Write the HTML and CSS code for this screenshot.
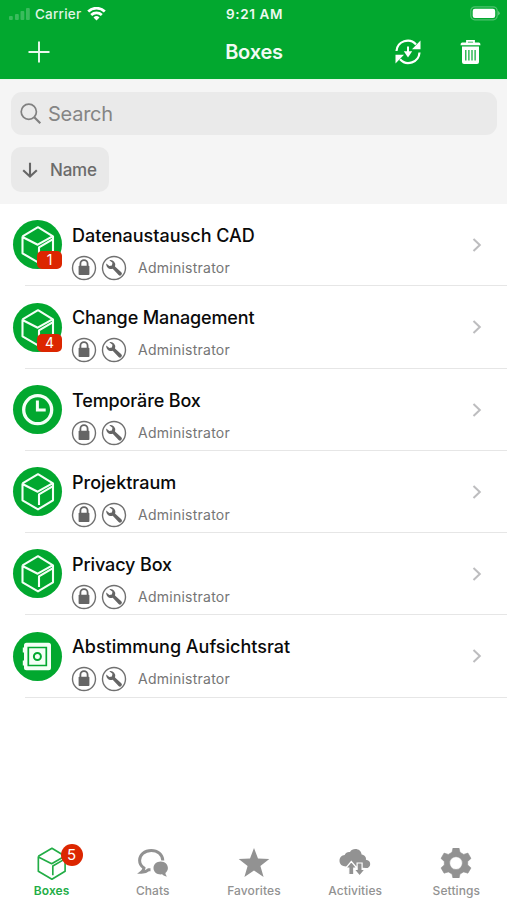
FILE: index.html
```html
<!DOCTYPE html>
<html lang="en">
<head>
<meta charset="utf-8">
<title>Boxes</title>
<link rel="stylesheet" href="styles.css">
</head>
<body>
<svg class="defs" aria-hidden="true">
  <symbol id="box" viewBox="0 0 49 49"><path d="M9.5 16.3 25 7.2l15 9.1v17L25 42.4 9.5 33.3V17l15.2 7.7L39 16.6M40 19.200l-14 8.200V38" fill="none" stroke="currentColor" stroke-linejoin="round"/></symbol>
  <symbol id="clock" viewBox="0 0 49 49"><circle cx="24.700" cy="24.700" r="14" fill="none" stroke="currentColor" stroke-width="3.300"/><path d="M24.400 15.500v9.600h8.300" fill="none" stroke="currentColor" stroke-width="3"/></symbol>
  <symbol id="safe" viewBox="0 0 49 49"><path d="M13.500 10.700h22q2.500 0 2.500 2.500v22.600q0 2.500-2.500 2.500h-22q-2.500 0-2.500-2.500v-2.300H9.800v-5H11v-8H9.800v-5H11v-2.300q0-2.500 2.500-2.500z" fill="currentColor"/><path d="M15.300 15.500h18v18h-18z" fill="none" stroke="#02a82f" stroke-width="1.700"/><circle cx="24.400" cy="24.500" r="3.500" fill="none" stroke="#02a82f" stroke-width="2"/></symbol>
  <symbol id="lock" viewBox="0 0 26 26"><circle cx="13" cy="13" r="11.500" fill="none" stroke="#707070" stroke-width="1.400"/><path d="M9.400 12V8.700a3.600 3.600 0 0 1 7.200 0V12" fill="none" stroke="#656565" stroke-width="1.800"/><rect x="7.600" y="10.800" width="10.800" height="9.300" rx=".8" fill="#656565"/></symbol>
  <symbol id="wrench" viewBox="0 0 26 26"><circle cx="13" cy="13" r="11.500" fill="none" stroke="#707070" stroke-width="1.400"/><path d="M8.300 5.200a4.800 4.800 0 0 1 5.700 6.400l6.300 5.700a1.900 1.900 0 0 1-2.700 2.700l-5.900-6.200a4.800 4.800 0 0 1-6.400-5.200l3 2.500 2.600-.7.600-2.600z" fill="#656565"/></symbol>
  <symbol id="chevron" viewBox="0 0 10 16"><path d="m1.500 2 6.300 6-6.300 6" fill="none" stroke="#bdbdbf" stroke-width="2"/></symbol>
</svg>
<div class="screen">
  <header class="top">
    <div class="status">
      <div class="carrier">
        <svg width="22" height="14" viewBox="0 0 22 14"><g fill="#fff" opacity=".22"><rect y="9" width="3.800" height="4" rx="1"/><rect x="6" y="7" width="3.800" height="6" rx="1"/><rect x="11.500" y="4" width="3.800" height="9" rx="1"/><rect x="17" y="1" width="3.800" height="12" rx="1"/></g></svg>
        <span class="carrier-name">Carrier</span>
        <svg width="19" height="14" viewBox="0 0 19 14"><g fill="none" stroke="#fff" stroke-width="2.700"><path d="M1.200 4.500a12 12 0 0 1 16.600 0M4.200 8a7.700 7.700 0 0 1 10.600 0"/></g><path d="m9.500 13.500-3-3.100a4.500 4.500 0 0 1 6 0z" fill="#fff"/></svg>
      </div>
      <span class="time">9:21 AM</span>
      <svg class="battery" width="30" height="15" viewBox="0 0 30 15"><rect x=".8" y=".8" width="26.400" height="13" rx="4" fill="none" stroke="#fff" stroke-opacity=".3" stroke-width="1.200"/><rect x="2.700" y="2.700" width="22.500" height="9.200" rx="2.200" fill="#fff"/><path d="M28.300 5v4.500q1.300-.8 1.300-2.200T28.300 5z" fill="#fff" opacity=".5"/></svg>
    </div>
    <nav class="bar">
      <svg width="22" height="22" viewBox="0 0 22 22"><path d="M11 .5v21M.5 11h21" stroke="#fff" stroke-opacity=".92" stroke-width="1.900"/></svg>
      <h1 class="title">Boxes</h1>
      <div class="actions">
        <svg width="26" height="26" viewBox="0 0 26 26"><path d="M1.500 12A11.200 11.200 0 0 1 21 5.400M24.500 13.500A11.200 11.200 0 0 1 5 20.300" fill="none" stroke="#fff" stroke-width="2.200"/><path d="M25.500 1.500v8.800h-8.500zM.5 24.500v-8.800H9z" fill="#fff"/><path d="M13 7.500v6" stroke="#fff" stroke-width="2"/><path d="M8.800 12.300h8.400L13 18.500z" fill="#fff"/></svg>
        <svg width="21" height="26" viewBox="0 0 21 26"><path d="M7 4V1.800h7V4" fill="none" stroke="#fff" stroke-width="1.800"/><path d="M2 3.600h17q1.500 0 1.500 2.600H.5Q.5 3.600 2 3.600z" fill="#fff"/><path d="M2 7.500h17V23q0 2-2 2H4q-2 0-2-2z" fill="#fff"/><path d="M5.800 11v10.500M8.900 11v10.500M12 11v10.500M15.100 11v10.500" stroke="#02a82f" stroke-width="1.200"/></svg>
      </div>
    </nav>
  </header>
  <section class="filters">
    <div class="search">
      <svg width="22" height="22" viewBox="0 0 22 22"><circle cx="8.800" cy="8.800" r="7.600" fill="none" stroke="#808080" stroke-width="1.700"/><path d="m14.300 14.300 6 6" stroke="#808080" stroke-width="2.200"/></svg>
      <span class="search-text">Search</span>
    </div>
    <div class="sort">
      <svg width="16" height="16" viewBox="0 0 16 16"><path d="M8 .7v13.500M1.200 8.200 8 14.500l6.800-6.300" fill="none" stroke="#666" stroke-width="2.100"/></svg>
      <span class="sort-text">Name</span>
    </div>
  </section>
  <main class="list">
    <div class="row"><div class="avatar"><svg class="glyph"><use href="#box"/></svg><span class="count">1</span></div><div class="info"><div class="name">Datenaustausch CAD</div><div class="meta"><svg><use href="#lock"/></svg><svg><use href="#wrench"/></svg><span class="role">Administrator</span></div></div><svg class="chevron"><use href="#chevron"/></svg></div>
    <div class="row"><div class="avatar"><svg class="glyph"><use href="#box"/></svg><span class="count">4</span></div><div class="info"><div class="name tight">Change Management</div><div class="meta"><svg><use href="#lock"/></svg><svg><use href="#wrench"/></svg><span class="role">Administrator</span></div></div><svg class="chevron"><use href="#chevron"/></svg></div>
    <div class="row"><div class="avatar"><svg class="glyph"><use href="#clock"/></svg></div><div class="info"><div class="name tight">Temporäre Box</div><div class="meta"><svg><use href="#lock"/></svg><svg><use href="#wrench"/></svg><span class="role">Administrator</span></div></div><svg class="chevron"><use href="#chevron"/></svg></div>
    <div class="row"><div class="avatar"><svg class="glyph"><use href="#box"/></svg></div><div class="info"><div class="name">Projektraum</div><div class="meta"><svg><use href="#lock"/></svg><svg><use href="#wrench"/></svg><span class="role">Administrator</span></div></div><svg class="chevron"><use href="#chevron"/></svg></div>
    <div class="row"><div class="avatar"><svg class="glyph"><use href="#box"/></svg></div><div class="info"><div class="name tight">Privacy Box</div><div class="meta"><svg><use href="#lock"/></svg><svg><use href="#wrench"/></svg><span class="role">Administrator</span></div></div><svg class="chevron"><use href="#chevron"/></svg></div>
    <div class="row"><div class="avatar"><svg class="glyph"><use href="#safe"/></svg></div><div class="info"><div class="name">Abstimmung Aufsichtsrat</div><div class="meta"><svg><use href="#lock"/></svg><svg><use href="#wrench"/></svg><span class="role">Administrator</span></div></div><svg class="chevron"><use href="#chevron"/></svg></div>
  </main>
  <footer class="tabs">
    <div class="tab active"><div class="tab-icon"><svg class="tab-box" width="43" height="43"><use href="#box"/></svg><span class="bubble">5</span></div><span>Boxes</span></div>
    <div class="tab"><div class="tab-icon"><svg width="32" height="30" viewBox="0 0 32 30"><path d="M25.800 12.500C25.500 6.500 20.500 2.400 14.300 2.400 7.500 2.400 2.600 6.800 2.600 12.300c0 3.300 1.700 6 4.400 7.800-.3 1.900-1.200 3.200-2.500 4.200 3 0 5-.8 6.900-2.500h2.100" fill="none" stroke="#929292" stroke-width="3"/><path d="M23.700 13.500c4 0 7.200 2.800 7.200 6.500 0 2-1 3.800-2.500 5 .1 1.500.8 2.500 1.600 3.500-2.100 0-3.500-.9-4.800-2.200-4.800.7-8.700-2-8.700-6.300 0-3.700 3.200-6.500 7.200-6.500z" fill="#929292"/></svg></div><span>Chats</span></div>
    <div class="tab"><div class="tab-icon"><svg width="32" height="30" viewBox="0 0 32 30"><path d="m16 0 4 10.600 11.300.4-8.900 7 3.200 11L16 22.600 6.400 29l3.200-11L.7 11l11.300-.4z" fill="#929292"/></svg></div><span>Favorites</span></div>
    <div class="tab"><div class="tab-icon"><svg width="32" height="30" viewBox="0 0 32 30"><path d="M7 18.500c-3.900 0-6.500-2.300-6.500-5.700 0-3.200 2.200-5.500 5.200-5.700C6.500 4.600 9 3.500 11 4c1.300-2 3-2.900 5.300-2.900 3.500 0 6 2.200 6.300 5.300 3.200.4 4.900 2.900 4.300 5.400 2.500.3 4.300 1.900 4.300 4.100 0 2.500-1.800 4.200-4.200 4.200z" fill="#929292"/><path d="m12.300 13.500 5.500 6.500h-3v6.500H9.800V20h-3zM20.600 28l5.500-6.500h-3V15h-5v6.500h-3z" fill="#929292" stroke="#fff" stroke-width="1.200"/></svg></div><span>Activities</span></div>
    <div class="tab"><div class="tab-icon"><svg width="32" height="30" viewBox="-.5 0 32 30"><path d="M12.500 0h6l1 4.300 3.700 2.100 4.200-1.300 3.100 5.300-3.300 3v3.500l3.300 3-3.100 5.300-4.200-1.300-3.700 2.100-1 4.300h-6l-1-4.300-3.700-2.100-4.200 1.300-3.100-5.300 3.300-3v-3.500l-3.300-3 3.100-5.300 4.200 1.300 3.700-2.100zM15.500 8.700a6.400 6.400 0 1 0 0 12.800 6.400 6.400 0 0 0 0-12.800z" fill="#929292" fill-rule="evenodd" stroke="#929292" stroke-width=".6" stroke-linejoin="round"/></svg></div><span>Settings</span></div>
  </footer>
</div>
</body>
</html>
```

FILE: styles.css
```css
* { box-sizing: border-box; }
body { margin: 0; font-family: Inter, "Liberation Sans", sans-serif; background: #fff; }
svg { display: block; flex: none; }
.defs { position: absolute; width: 0; height: 0; }
.screen { display: flex; flex-direction: column; width: 507px; height: 900px; overflow: hidden; }
.top { height: 79px; background: #02a82f; color: #fff; }
.status { display: grid; grid-template-columns: 1fr auto 1fr; align-items: center; height: 27px; padding: 0 7px 0 9px; }
.carrier { display: flex; align-items: center; }
.carrier-name { margin: 0 6px 0 4px; font-size: 13.500px; line-height: 16px; font-weight: 500; letter-spacing: .2px; opacity: .88; }
.time { font-size: 13.500px; font-weight: 600; letter-spacing: .6px; opacity: .93; }
.battery { justify-self: end; }
.bar { display: grid; grid-template-columns: 1fr auto 1fr; align-items: center; height: 50px; padding: 0 26px 0 28px; }
.title { margin: 0; padding-right: 1px; font-size: 20px; line-height: 24px; font-weight: 600; letter-spacing: -.2px; opacity: .95; }
.actions { display: flex; justify-content: flex-end; gap: 39px; }
.filters { height: 125px; padding: 12px 10px 0 11px; background: #f5f5f5; border-top: 1px solid #e8f8eb; }
.search { display: flex; align-items: center; gap: 6px; height: 43px; padding-left: 9px; border-radius: 11px; background: #eaeaea; }
.search-text { font-size: 20px; line-height: 24px; letter-spacing: -.25px; color: #858585; }
.sort { display: flex; align-items: center; gap: 12px; width: 98px; height: 45px; margin-top: 12px; padding-left: 11px; border-radius: 10px; background: #e9e9e9; }
.sort-text { font-size: 17px; font-weight: 500; letter-spacing: -.2px; color: #6b6b6b; }
.list { display: flex; flex-direction: column; }
.row { display: flex; height: 82.250px; padding: 0 25px 0 13px; background: linear-gradient(#e6e6e6, #e6e6e6) 25px 100% / 100% 1px no-repeat; }
.avatar { position: relative; width: 49px; height: 49px; margin-top: 16.400px; border-radius: 50%; background: #02a82f; color: #f4fff6; }
.glyph { width: 49px; height: 49px; stroke-width: 2.100; }
.count { position: absolute; right: 0; bottom: 0; width: 25px; height: 18px; border-radius: 5px; background: #dc2600; color: #fff; font-size: 14px; line-height: 18px; text-align: center; }
.info { flex: 1; padding: 20px 0 0 10px; }
.name { font-size: 18px; line-height: 24px; font-weight: 500; color: #0a0a0a; white-space: nowrap; }
.tight { letter-spacing: -.12px; }
.meta { display: flex; align-items: center; gap: 3.500px; margin-top: 7px; margin-left: -1px; }
.meta svg { width: 26px; height: 26px; }
.role { margin-left: 8px; font-size: 14px; line-height: 20px; letter-spacing: .25px; color: #757575; }
.chevron { width: 10px; height: 16px; margin-top: 33px; }
.tabs { display: grid; grid-template-columns: repeat(5, 101.200px); margin-top: auto; height: 53px; padding-left: 1px; }
.tab { display: flex; flex-direction: column; align-items: center; gap: 6px; color: #929292; font-size: 12px; line-height: 15px; font-weight: 500; letter-spacing: .1px; }
.tab-icon { position: relative; display: flex; align-items: center; justify-content: center; width: 32px; height: 30px; padding-top: 2px; }
.active { color: #22ad46; font-weight: 600; }
.tab-box { stroke-width: 1.900; }
.bubble { position: absolute; left: 25px; top: -3px; width: 22px; height: 22px; border-radius: 50%; background: #dc2600; color: #fff; font-size: 15px; font-weight: 400; line-height: 22px; text-align: center; }
```
